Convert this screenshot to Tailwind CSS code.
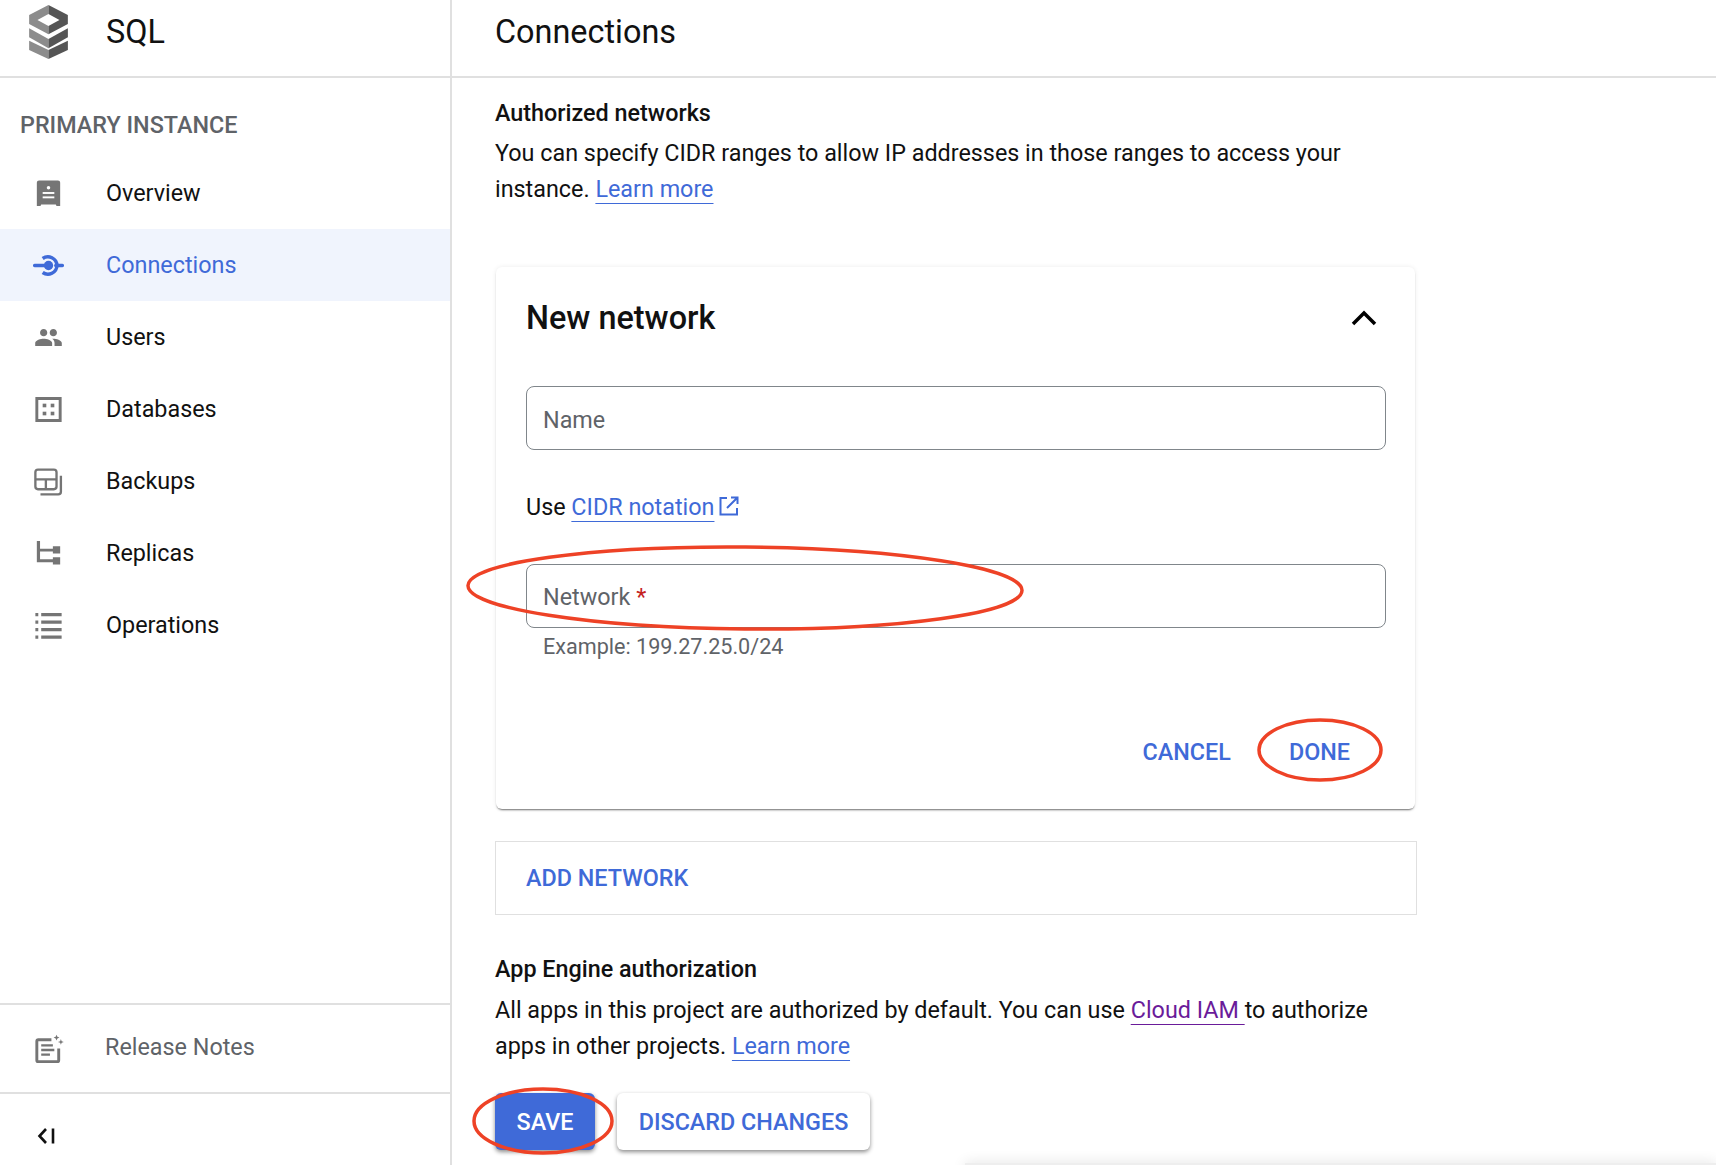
<!DOCTYPE html>
<html lang="en">
<head>
    <meta charset="UTF-8"/>
    <title>SQL Connections</title>
    <script src="https://cdn.jsdelivr.net/npm/@tailwindcss/browser@4"></script>
</head>
<body class="bg-white font-['Roboto',sans-serif] text-[#111] relative h-[1165px] w-[1716px] overflow-hidden">
<div class="flex h-full">

    <!-- Sidebar -->
    <aside class="w-[452px] h-full shrink-0 border-r-2 border-[#e0e0e0] flex flex-col">
        <div class="h-[78px] shrink-0 border-b-2 border-[#e0e0e0] flex items-center pb-[12px]">
            <svg class="ml-[29px] w-[39px] h-[54px]" viewBox="0 0 38.700 54">
                <path fill="#8c8c8c" fill-rule="evenodd" d="M19.300 0 0 10v9l19.300 10.300V21L8.300 15l11-6z"/>
                <path fill="#555" fill-rule="evenodd" d="M19.300 0 38.700 10v9L19.300 29.300V21l11-6-11-6z"/>
                <path fill="#8c8c8c" d="M0 23.300 19.300 34v9.300L0 32.300z"/>
                <path fill="#555" d="M38.700 23.300 19.300 34v9.300l19.400-11z"/>
                <path fill="#8c8c8c" d="M0 35.700 19.300 45v9L0 45z"/>
                <path fill="#555" d="M38.700 35.700 19.300 45v9l19.400-9z"/>
            </svg>
            <span class="ml-[38px] text-[32.400px]">SQL</span>
        </div>

        <div class="pl-[20px] pt-[29px] h-[79px] text-[23.350px] leading-[36px] font-medium text-[#5f6368] shrink-0">PRIMARY INSTANCE</div>

        <nav class="text-[23.350px]">
            <a class="flex items-center h-[72px]">
                <svg class="w-[35px] h-[35px] ml-[31px] mr-[40px] text-[#757575]" viewBox="0 0 24 24" fill="currentColor"><path d="M5.500 3h13A1.500 1.500 0 0 1 20 4.500V20.500h-2.500L17 19.500H7l-.5 1H4V4.500A1.500 1.500 0 0 1 5.500 3z"/><circle cx="12" cy="8" r="1.200" fill="#fff"/><rect x="8" y="11" width="8" height="1.300" fill="#fff"/><rect x="8" y="14" width="8" height="1.300" fill="#fff"/></svg>
                <span class="pt-[2px]">Overview</span>
            </a>
            <a class="flex items-center h-[72px] bg-[#f0f4fd] text-[#3f6ad8]">
                <svg class="w-[35px] h-[35px] ml-[31px] mr-[40px]" viewBox="0 0 24 24" fill="none" stroke="currentColor" stroke-width="2.400"><path d="M8 7.200A6.200 6.200 0 0 1 17.800 12 6.200 6.200 0 0 1 8 16.800"/><path d="M2.500 12H10M17 12h4.500" stroke-linecap="round"/><circle cx="12" cy="12" r="3.200" fill="currentColor" stroke="none"/></svg>
                <span class="pt-[2px]">Connections</span>
            </a>
            <a class="flex items-center h-[72px]">
                <svg class="w-[29px] h-[29px] ml-[34px] mr-[43px] text-[#757575]" viewBox="0 0 24 24" fill="currentColor"><path d="M16 11c1.660 0 2.990-1.340 2.990-3S17.660 5 16 5c-1.660 0-3 1.340-3 3s1.340 3 3 3zm-8 0c1.660 0 2.990-1.340 2.990-3S9.660 5 8 5C6.340 5 5 6.340 5 8s1.340 3 3 3zm0 2c-2.330 0-7 1.170-7 3.500V19h14v-2.500c0-2.330-4.670-3.500-7-3.500zm8 0c-.290 0-.620.020-.970.050 1.160.840 1.970 1.970 1.970 3.450V19h6v-2.500c0-2.330-4.670-3.500-7-3.500z"/></svg>
                <span class="pt-[2px]">Users</span>
            </a>
            <a class="flex items-center h-[72px]">
                <svg class="w-[35px] h-[35px] ml-[31px] mr-[40px] text-[#757575]" viewBox="0 0 24 24" fill="currentColor"><path fill-rule="evenodd" d="M3 3.500h18v17H3zM5 5.500v13h14v-13z"/><rect x="8" y="8" width="2.500" height="2.500"/><rect x="13.500" y="8" width="2.500" height="2.500"/><rect x="8" y="13.500" width="2.500" height="2.500"/><rect x="13.500" y="13.500" width="2.500" height="2.500"/></svg>
                <span class="pt-[2px]">Databases</span>
            </a>
            <a class="flex items-center h-[72px]">
                <svg class="w-[35px] h-[35px] ml-[31px] mr-[40px] text-[#757575]" viewBox="0 0 24 24" fill="none" stroke="currentColor" stroke-width="1.600"><rect x="3" y="3.800" width="14.500" height="13.500" rx="1.800"/><path d="M3 10.500h14.500M10.200 10.500v6.800"/><path d="M20.500 8v11a1.800 1.800 0 0 1-1.800 1.800H6.500"/></svg>
                <span class="pt-[2px]">Backups</span>
            </a>
            <a class="flex items-center h-[72px]">
                <svg class="w-[35px] h-[35px] ml-[31px] mr-[40px] text-[#757575]" viewBox="0 0 24 24" fill="currentColor"><path d="M4 3.500h2.200v5.300H15V7h5v5h-5v-1.300H6.200V16H15v-1.500h5v5h-5V18H4z"/></svg>
                <span class="pt-[2px]">Replicas</span>
            </a>
            <a class="flex items-center h-[72px]">
                <svg class="w-[35px] h-[35px] ml-[31px] mr-[40px] text-[#757575]" viewBox="0 0 24 24" fill="currentColor"><path d="M3 3.500h2v2.200H3zM7 3.500h14v2.200H7zM3 8.600h2v2.200H3zM7 8.600h14v2.200H7zM3 13.700h2v2.200H3zM7 13.700h14v2.200H7zM3 18.800h2v2.200H3zM7 18.800h14v2.200H7z"/></svg>
                <span class="pt-[2px]">Operations</span>
            </a>
        </nav>

        <div class="mt-auto">
            <div class="h-[89px] border-t-2 border-[#e0e0e0] flex items-center text-[23.350px] text-[#5f6368]">
                <svg class="w-[35px] h-[35px] ml-[31px] mr-[39px] text-[#757575]" viewBox="0 0 24 24" fill="currentColor"><path d="M17.500 2.500l.6 1.400 1.400.6-1.400.6-.6 1.400-.6-1.400-1.400-.6 1.400-.6zM20.500 5.500l.5 1.500 1.500.5-1.500.5-.5 1.500-.5-1.500-1.500-.5 1.500-.5z"/><path fill-rule="evenodd" d="M5 5h9v2H5v13h13v-8h2v8a2 2 0 0 1-2 2H5a2 2 0 0 1-2-2V7a2 2 0 0 1 2-2z"/><path d="M7 9h8v1.600H7zM7 12.200h9v1.600H7zM7 15.400h6V17H7z"/></svg>
                <span class="-mt-[2px]">Release Notes</span>
            </div>
            <div class="h-[73px] border-t-2 border-[#e0e0e0] flex items-center">
                <svg class="w-[22px] h-[22px] ml-[36px] mt-[12px]" viewBox="0 0 22 22" fill="none" stroke="#111" stroke-width="2.600"><path d="M10 4 3.500 11 10 18"/><path d="M17 3.500V18.500"/></svg>
            </div>
        </div>
    </aside>

    <!-- Main -->
    <main class="flex-1">
        <div class="h-[78px] border-b-2 border-[#e0e0e0] flex items-center pl-[43px] pb-[12px]">
            <h1 class="text-[32.400px]">Connections</h1>
        </div>

        <div class="pl-[43px] w-[965px] text-[23.350px] leading-[36px]">
            <h2 class="pt-[17px] font-medium">Authorized networks</h2>
            <p class="mt-[4px]">You can specify CIDR ranges to allow IP addresses in those ranges to access your instance. <a class="text-[#3f6ad8] underline decoration-1 underline-offset-[6px]">Learn more</a></p>

            <!-- New network card -->
            <section class="mt-[60px] ml-[1px] w-[919px] h-[542px] rounded-[6px] bg-white shadow-[0_2px_2px_-1px_rgba(0,0,0,0.55),0_0_5px_rgba(0,0,0,0.08)] px-[30px] pt-[33px]">
                <div class="flex items-center justify-between h-[36px]">
                    <h3 class="text-[32.400px] font-medium">New network</h3>
                    <svg class="w-[28px] h-[18px] mr-[7px]" viewBox="0 0 28 18" fill="none" stroke="#000" stroke-width="3.500"><path d="M3 15 14 4l11 11"/></svg>
                </div>
                <div class="mt-[50px] h-[64px] border border-[#80868b] rounded-[8px] flex items-center px-[16px] pt-[3px] w-[860px] text-[#5f6368]">Name</div>
                <p class="mt-[39px]">Use <a class="text-[#3f6ad8] underline decoration-1 underline-offset-[6px]">CIDR notation</a> <svg class="inline w-[22px] h-[22px] -mt-[6px] -ml-[2px]" viewBox="0 0 22 22" fill="none" stroke="#3f6ad8" stroke-width="2"><path d="M9 3H2.500v16.500H19V13"/><path d="M13 2.500h6.500V9M19.500 2.500 9 13"/></svg></p>
                <div class="mt-[39px] h-[64px] border border-[#80868b] rounded-[8px] flex items-center px-[16px] pt-[1px] w-[860px] text-[#5f6368]">Network <span class="text-[#c5221f] ml-[6px]">*</span></div>
                <p class="mt-[1px] pl-[17px] text-[21.600px] leading-[36px] text-[#5f6368]">Example: 199.27.25.0/24</p>
                <div class="mt-[69px] flex justify-end font-medium text-[#3f6ad8] pr-[35px] gap-[58px]">
                    <button>CANCEL</button>
                    <button>DONE</button>
                </div>
            </section>

            <div class="mt-[32px] w-[922px] h-[74px] border border-[#e0e0e0] flex items-center pl-[30px] font-medium text-[#3f6ad8]">ADD NETWORK</div>

            <h2 class="mt-[36px] font-medium">App Engine authorization</h2>
            <p class="mt-[5px] w-[900px]">All apps in this project are authorized by default. You can use <a class="text-[#6a1b9a] underline decoration-1 underline-offset-[6px]">Cloud IAM </a>to authorize apps in other projects. <a class="text-[#3f6ad8] underline decoration-1 underline-offset-[6px]">Learn more</a></p>

            <div class="mt-[29px] flex gap-[22px] font-medium">
                <button class="w-[100px] h-[57px] rounded-[6px] bg-[#3f6ad8] text-white shadow-[0_2px_4px_rgba(0,0,0,0.45)]">SAVE</button>
                <button class="w-[253px] h-[57px] rounded-[6px] bg-white text-[#3f6ad8] shadow-[0_2px_4px_rgba(0,0,0,0.45)]">DISCARD CHANGES</button>
            </div>
        </div>
    </main>
</div>

<!-- Panel edge peeking in at the bottom right -->
<div class="absolute left-[965px] top-[1163px] w-[751px] h-[10px] bg-[#eeeeee] shadow-[0_0_14px_rgba(0,0,0,0.12)]"></div>

<!-- Red annotation ellipses -->
<svg class="absolute inset-0 w-[1716px] h-[1165px] pointer-events-none" viewBox="0 0 1716 1165" fill="none" stroke="#ee4226" stroke-width="3.500">
    <ellipse cx="745" cy="588" rx="277" ry="41" transform="rotate(0.500 745 588)"/>
    <ellipse cx="1320" cy="750" rx="61" ry="30"/>
    <ellipse cx="543" cy="1121" rx="69" ry="32"/>
</svg>
</body>
</html>
